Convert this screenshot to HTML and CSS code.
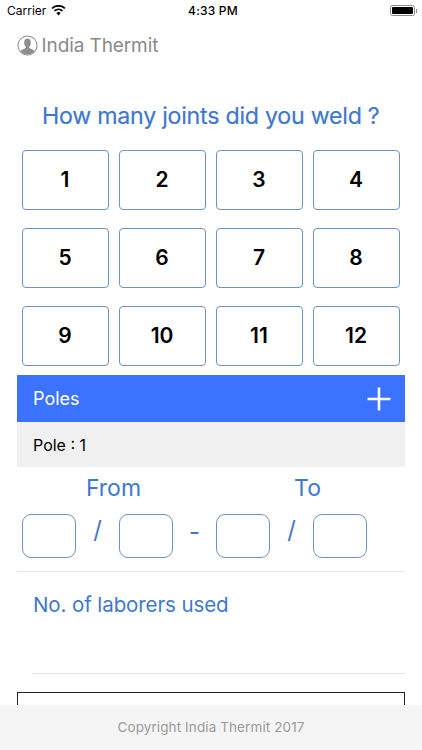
FILE: index.html
```html
<!DOCTYPE html>
<html lang="en">
<head>
<meta charset="utf-8">
<title>India Thermit</title>
<link rel="stylesheet" href="styles.css">
</head>
<body>
<div class="app">
  <div class="status">
    <div class="status-left">
      <span>Carrier</span>
      <svg class="wifi" viewBox="0 0 16 12" width="15" height="11"><path d="M8 11.500 5.600 8.600a3.600 3.600 0 0 1 4.800 0z" fill="#000"/><path d="M3.600 6.500a6.600 6.600 0 0 1 8.800 0" fill="none" stroke="#000" stroke-width="1.900"/><path d="M1 3.600a10.400 10.400 0 0 1 14 0" fill="none" stroke="#000" stroke-width="1.900"/></svg>
    </div>
    <div class="status-time">4:33 PM</div>
    <div class="status-right">
      <div class="battery"><div class="battery-fill"></div></div>
      <div class="battery-cap"></div>
    </div>
  </div>
  <main class="content">
    <div class="brand">
      <svg class="avatar" viewBox="0 0 22 22" width="21" height="21"><circle cx="11" cy="11" r="10" fill="#fff" stroke="#8e8e8e" stroke-width="1.100"/><path d="M3.600 17.400c1-2.200 3.600-2.800 5.200-3.600.5-.4.5-1.100.2-1.700C8 11 7.500 9.500 7.500 7.800 7.500 5.300 9 3.700 11 3.700s3.500 1.600 3.500 4.100c0 1.700-.5 3.200-1.500 4.300-.3.600-.3 1.300.2 1.700 1.600.8 4.200 1.400 5.200 3.600A10 10 0 0 1 11 20.500a10 10 0 0 1-7.400-3.100z" fill="#8e8e8e"/></svg>
      <span class="brand-name">India Thermit</span>
    </div>
    <h1 class="question">How many joints did you weld ?</h1>
    <div class="grid">
      <div class="num">1</div><div class="num">2</div><div class="num">3</div><div class="num">4</div>
      <div class="num">5</div><div class="num">6</div><div class="num">7</div><div class="num">8</div>
      <div class="num">9</div><div class="num">10</div><div class="num">11</div><div class="num">12</div>
    </div>
    <div class="poles-bar">
      <span>Poles</span>
      <svg class="plus" viewBox="0 0 24 24" width="24" height="24"><path d="M12 0.500v23M0.500 12h23" stroke="#fff" stroke-width="2.600" fill="none"/></svg>
    </div>
    <div class="pole-row">Pole : 1</div>
    <div class="range-labels">
      <span class="range-label">From</span>
      <span class="range-label">To</span>
    </div>
    <div class="range">
      <div class="box"></div><span class="sep">/</span>
      <div class="box"></div><span class="sep sep-dash">-</span>
      <div class="box"></div><span class="sep">/</span>
      <div class="box"></div>
    </div>
    <div class="laborers">
      <div class="laborers-label">No. of laborers used</div>
      <div class="laborers-line"></div>
    </div>
    <div class="next-box"></div>
  </main>
  <footer class="footer">Copyright India Thermit 2017</footer>
</div>
</body>
</html>
```

FILE: styles.css
```css
* { box-sizing: border-box; }
html, body { margin: 0; padding: 0; background: #fff; }
body { font-family: Inter, "Liberation Sans", sans-serif; }
.app { width: 422px; height: 750px; display: flex; flex-direction: column; overflow: hidden; }

.status { height: 21px; margin-bottom: 1px; flex: none; display: grid; grid-template-columns: 1fr auto 1fr; align-items: center; padding: 0 5px 0 7px; font-size: 12px; color: #000; }
.status-left { display: flex; align-items: center; gap: 5px; }
.status-time { font-weight: 500; font-size: 12px; letter-spacing: .2px; margin-left: 2px; }
.status-right { display: flex; justify-content: flex-end; align-items: center; }
.battery { width: 25px; height: 11px; border: 1px solid #8a8a8a; border-radius: 2.500px; padding: 1px; }
.battery-fill { width: 100%; height: 100%; background: #000; border-radius: 1px; }
.battery-cap { width: 1.500px; height: 4px; background: #8a8a8a; margin-left: 1px; }

.content { flex: 1; min-height: 0; overflow: hidden; display: flex; flex-direction: column; padding: 0 17px 0 16.500px; }

.brand { flex: none; display: flex; align-items: center; gap: 4px; height: 24px; margin-top: 11px; color: #8a8a8a; }
.brand-name { font-size: 19px; letter-spacing: -.1px; }

.question { flex: none; margin: 39px 0 0; height: 40px; font-size: 23.200px; font-weight: 400; line-height: 40px; color: #3f78cf; text-align: center; letter-spacing: -.25px; -webkit-text-stroke: .2px #3f78cf; }

.grid { flex: none; margin: 14px 0 0 5.500px; display: grid; grid-template-columns: repeat(4, 87px); grid-auto-rows: 60px; column-gap: 10px; row-gap: 18px; }
.num { border: 1px solid #6f92c2; border-radius: 4px; display: flex; align-items: center; justify-content: center; font-size: 21px; font-weight: 600; color: #000; padding-bottom: 2px; padding-right: 1px; }

.poles-bar { margin-top: 9px; height: 47px; flex: none; background: #3b72ff; color: #fff; display: flex; align-items: center; justify-content: space-between; padding: 0 14px 0 16.500px; font-size: 18px; }
.pole-row { height: 45px; flex: none; background: #f0f0f0; display: flex; align-items: center; padding-left: 16.500px; font-size: 16px; color: #000; }

.range-labels { height: 47px; flex: none; display: grid; grid-template-columns: 194px 194px; }
.range-label { font-size: 23px; line-height: 42px; color: #3f78cf; text-align: center; }

.range { display: flex; flex: none; align-items: center; margin-left: 5.500px; height: 44px; }
.box { width: 54px; height: 44px; border: 1px solid #6f92c2; border-radius: 9px; flex: none; }
.sep { width: 43px; text-align: center; font-size: 24px; color: #3f78cf; line-height: 32px; height: 44px; }
.sep-dash { line-height: 36px; }

.laborers { margin-top: 13px; border-top: 1px solid #e8e8e8; padding-left: 16.500px; flex: none; }
.laborers-label { font-size: 20.500px; line-height: 26px; color: #3f78cf; margin-top: 20px; letter-spacing: -.1px; }
.laborers-line { height: 1px; background: #e4e4e4; margin-top: 55px; }

.next-box { margin-top: 18px; height: 40px; flex: none; border: 1px solid #222; }

.footer { height: 45px; flex: none; background: #f5f5f5; color: #9a9a9a; font-size: 13.500px; padding-bottom: 1px; display: flex; align-items: center; justify-content: center; letter-spacing: .1px; }
```
